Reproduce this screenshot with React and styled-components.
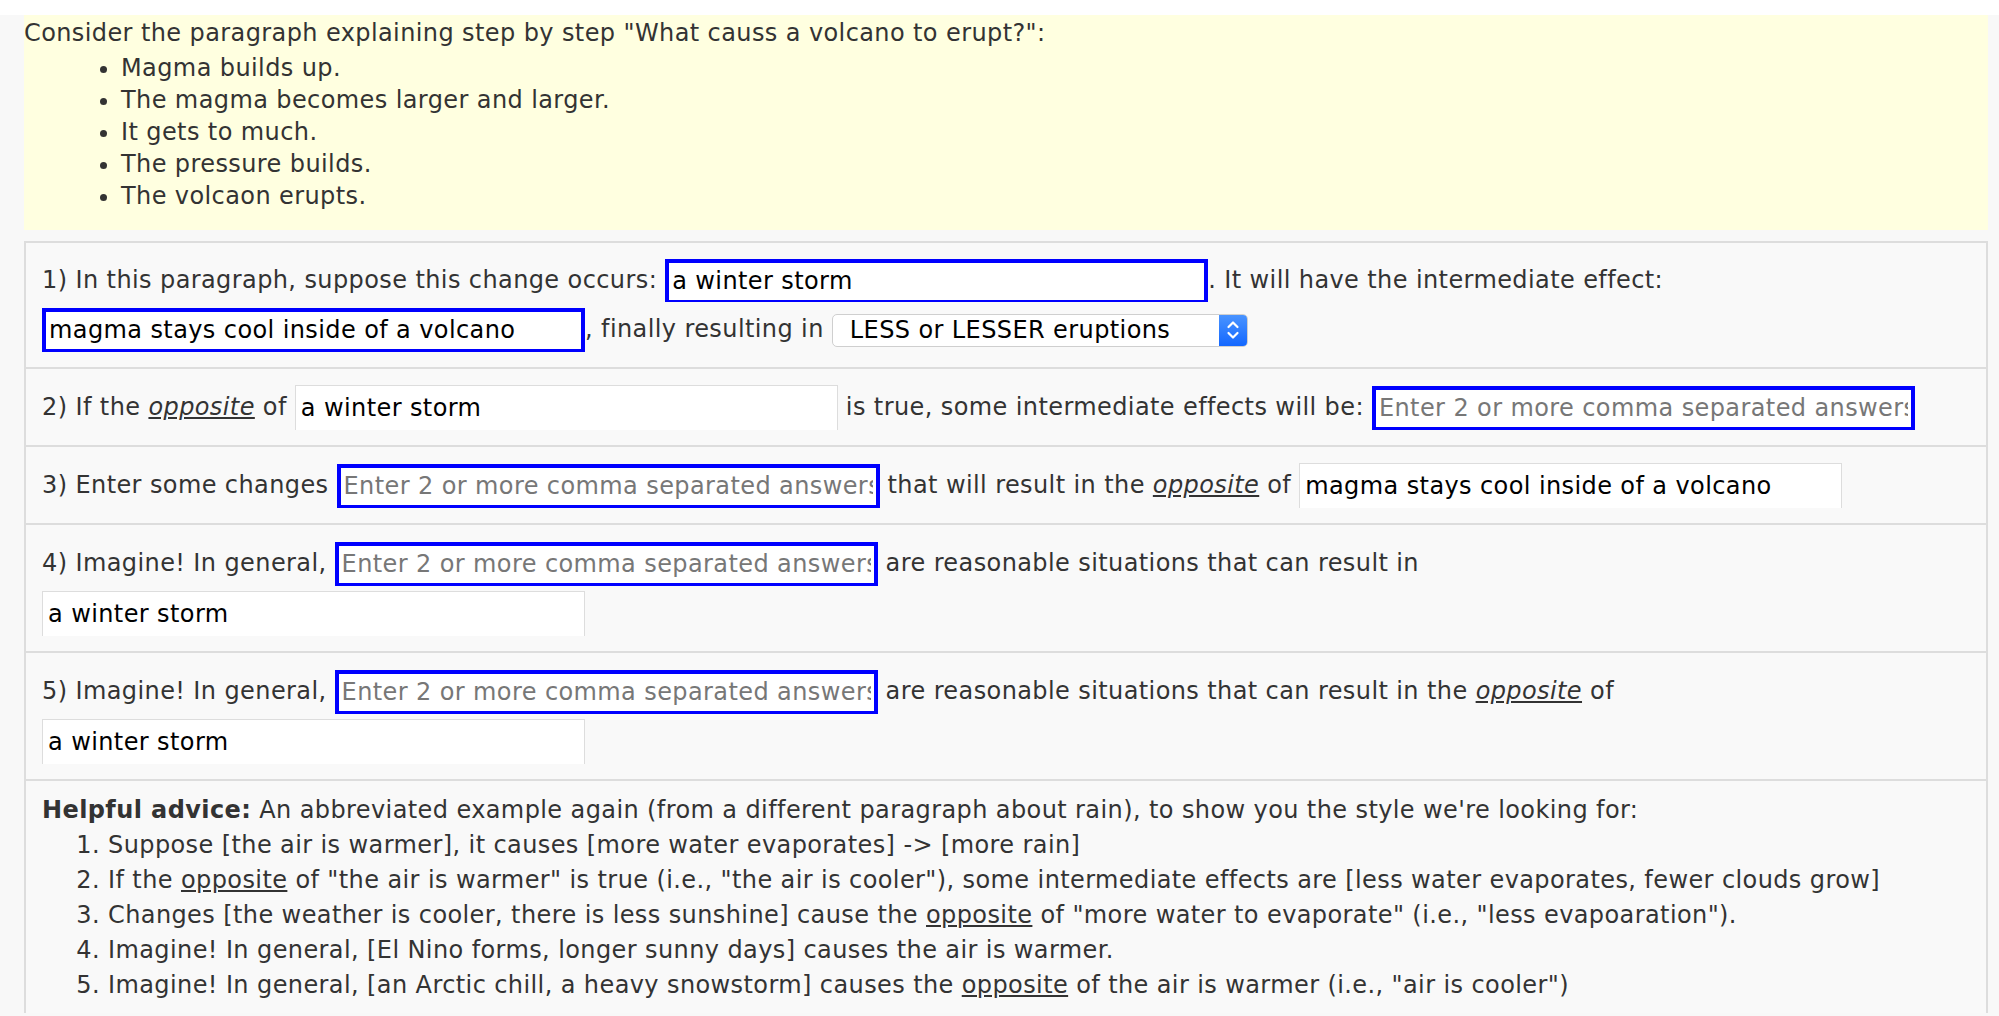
import styled, { createGlobalStyle } from "styled-components";

const GlobalStyle = createGlobalStyle`
  body {
    margin: 0;
    background: #ffffff;
    font-family: "DejaVu Sans", "Verdana", sans-serif;
    letter-spacing: 0.4px;
    color: #333;
  }
`;

const Page = styled.div`
  margin-top: 15px;
  background: #f8f8f8;
  padding: 0 11px 0 24px;
  min-height: 1001px;
  font-size: 24px;
`;

const Paragraph = styled.div`
  background: #ffffe0;
  padding: 2px 0 18px;
  line-height: 32px;
`;

const Steps = styled.ul`
  margin: 3px 0 0;
  padding-left: 97px;
`;

const Panel = styled.div`
  margin-top: 11px;
  background: #f9f9f9;
  border: 2px solid #dddddd;
  border-bottom: none;
`;

const Row = styled.div`
  padding: 15px 16px 15px 16px;
  border-bottom: 2px solid #dddddd;
`;

const Line = styled.div`
  white-space: nowrap;
  overflow: hidden;
  height: ${(p) => (p.$tall ? 46 : 44)}px;
  line-height: ${(p) => (p.$tall ? 46 : 44)}px;
  & + & {
    margin-top: 4px;
  }
`;

const Field = styled.input`
  box-sizing: border-box;
  width: 543px;
  height: ${(p) => (p.$blue ? 45 : 46)}px;
  vertical-align: middle;
  margin: 0;
  padding: 0 ${(p) => (p.$blue ? 3 : 5)}px;
  border: ${(p) => (p.$blue ? "4px solid #0000ff" : "1px solid #dddddd")};
  background: #ffffff;
  font: inherit;
  font-size: 24px;
  letter-spacing: 0.4px;
  color: #000;
  outline: none;
  &::placeholder {
    color: #777;
  }
`;

const Select = styled.span`
  display: inline-flex;
  box-sizing: border-box;
  width: 416px;
  height: 33px;
  vertical-align: middle;
  background: #ffffff;
  border: 1px solid #cfcfcf;
  border-radius: 5px;
  overflow: hidden;
  color: #000;
`;

const SelectText = styled.span`
  flex: 1;
  padding-left: 17px;
  line-height: 31px;
`;

const SelectArrow = styled.span`
  width: 28px;
  display: flex;
  align-items: center;
  justify-content: center;
  background: linear-gradient(#4a94ff, #1367ff);
`;

const Opp = styled.span`
  font-style: ${(p) => (p.$plain ? "normal" : "italic")};
  text-decoration: underline;
`;

const Advice = styled.div`
  padding: 12px 16px 10px;
  line-height: 35px;
`;

const AdviceList = styled.ol`
  margin: 0;
  padding-left: 66px;
`;

function Chevrons() {
  return (
    <svg width="16" height="24" viewBox="0 0 16 24" fill="none" stroke="#fff" strokeWidth="2.2" strokeLinecap="round" strokeLinejoin="round">
      <path d="M3.5 9 L8 4.5 L12.5 9" />
      <path d="M3.5 15 L8 19.5 L12.5 15" />
    </svg>
  );
}

const PH = "Enter 2 or more comma separated answers";

export default function App() {
  return (
    <>
      <GlobalStyle />
      <Page>
        <Paragraph>
          Consider the paragraph explaining step by step "What causs a volcano to erupt?":
          <Steps>
            <li>Magma builds up.</li>
            <li>The magma becomes larger and larger.</li>
            <li>It gets to much.</li>
            <li>The pressure builds.</li>
            <li>The volcaon erupts.</li>
          </Steps>
        </Paragraph>
        <Panel>
          <Row>
            <Line>
              1) In this paragraph, suppose this change occurs:{" "}
              <Field $blue readOnly value="a winter storm" />. It will have the intermediate effect:
            </Line>
            <Line $tall>
              <Field $blue readOnly value="magma stays cool inside of a volcano" />, finally resulting in{" "}
              <Select>
                <SelectText>LESS or LESSER eruptions</SelectText>
                <SelectArrow>
                  <Chevrons />
                </SelectArrow>
              </Select>
            </Line>
          </Row>
          <Row>
            <Line $tall>
              2) If the <Opp>opposite</Opp> of <Field readOnly value="a winter storm" /> is true, some intermediate effects will be:{" "}
              <Field $blue readOnly placeholder={PH} />
            </Line>
          </Row>
          <Row>
            <Line $tall>
              3) Enter some changes <Field $blue readOnly placeholder={PH} /> that will result in the <Opp>opposite</Opp> of{" "}
              <Field readOnly value="magma stays cool inside of a volcano" />
            </Line>
          </Row>
          <Row>
            <Line $tall>
              4) Imagine! In general, <Field $blue readOnly placeholder={PH} /> are reasonable situations that can result in
            </Line>
            <Line $tall>
              <Field readOnly value="a winter storm" />
            </Line>
          </Row>
          <Row>
            <Line $tall>
              5) Imagine! In general, <Field $blue readOnly placeholder={PH} /> are reasonable situations that can result in the{" "}
              <Opp>opposite</Opp> of
            </Line>
            <Line $tall>
              <Field readOnly value="a winter storm" />
            </Line>
          </Row>
          <Advice>
            <b>Helpful advice:</b> An abbreviated example again (from a different paragraph about rain), to show you the style we're looking for:
            <AdviceList>
              <li>Suppose [the air is warmer], it causes [more water evaporates] -&gt; [more rain]</li>
              <li>
                If the <Opp $plain>opposite</Opp> of "the air is warmer" is true (i.e., "the air is cooler"), some intermediate effects are [less water evaporates, fewer clouds grow]
              </li>
              <li>
                Changes [the weather is cooler, there is less sunshine] cause the <Opp $plain>opposite</Opp> of "more water to evaporate" (i.e., "less evapoaration").
              </li>
              <li>Imagine! In general, [El Nino forms, longer sunny days] causes the air is warmer.</li>
              <li>
                Imagine! In general, [an Arctic chill, a heavy snowstorm] causes the <Opp $plain>opposite</Opp> of the air is warmer (i.e., "air is cooler")
              </li>
            </AdviceList>
          </Advice>
        </Panel>
      </Page>
    </>
  );
}
